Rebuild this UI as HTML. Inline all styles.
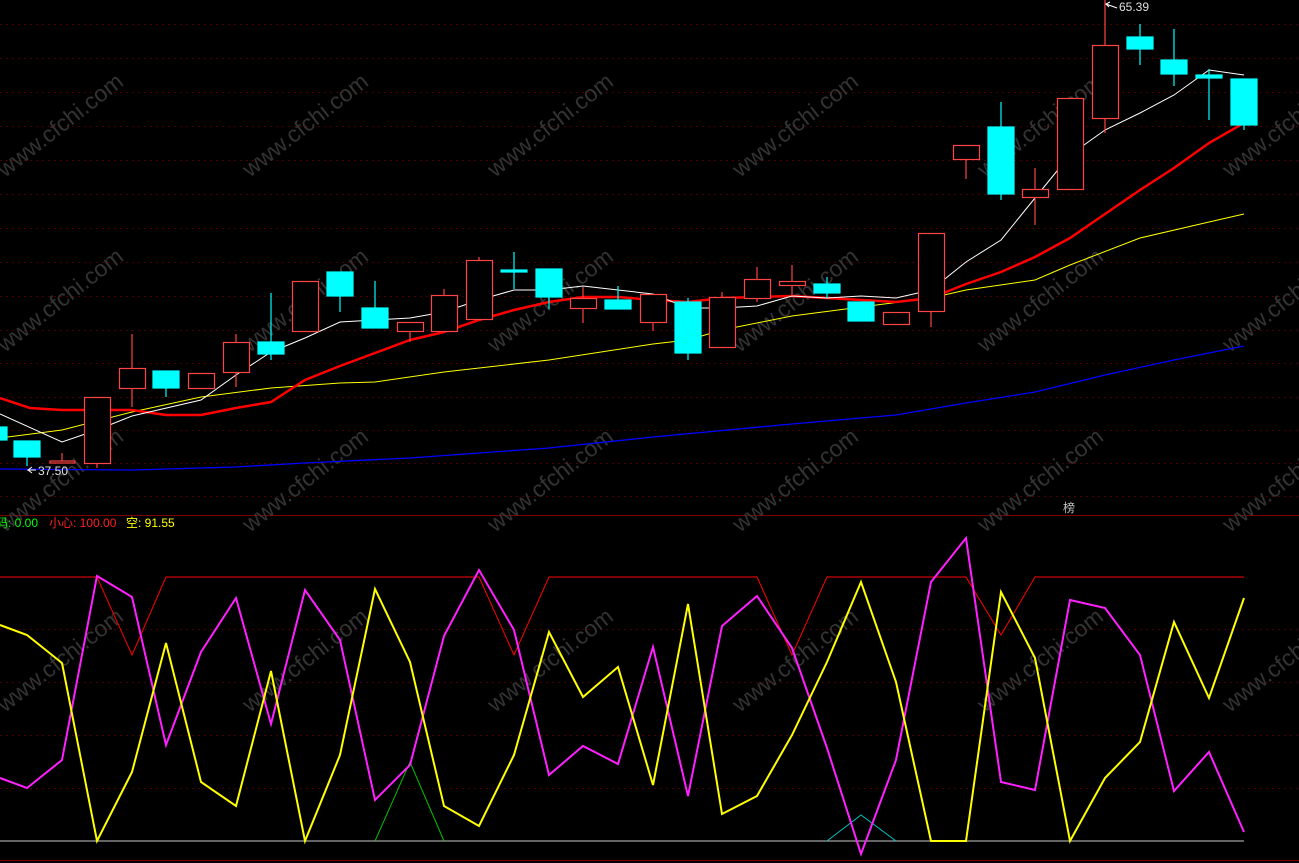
<!DOCTYPE html>
<html><head><meta charset="utf-8"><style>
body{margin:0;background:#000;width:1299px;height:863px;overflow:hidden}
svg{display:block}
text{font-family:"Liberation Sans","Noto Sans CJK SC",sans-serif}
</style></head><body>
<svg width="1299" height="863" viewBox="0 0 1299 863">
<rect width="1299" height="863" fill="#000"/>
<g stroke="#4a0000" stroke-dasharray="2,4" stroke-width="1">
<line x1="0" x2="1299" y1="24.5" y2="24.5"/><line x1="0" x2="1299" y1="58.5" y2="58.5"/><line x1="0" x2="1299" y1="92.5" y2="92.5"/><line x1="0" x2="1299" y1="126.5" y2="126.5"/><line x1="0" x2="1299" y1="160.5" y2="160.5"/><line x1="0" x2="1299" y1="194.5" y2="194.5"/><line x1="0" x2="1299" y1="228.5" y2="228.5"/><line x1="0" x2="1299" y1="262.5" y2="262.5"/><line x1="0" x2="1299" y1="296.5" y2="296.5"/><line x1="0" x2="1299" y1="330.5" y2="330.5"/><line x1="0" x2="1299" y1="363.5" y2="363.5"/><line x1="0" x2="1299" y1="397.5" y2="397.5"/><line x1="0" x2="1299" y1="430.5" y2="430.5"/><line x1="0" x2="1299" y1="463.5" y2="463.5"/><line x1="0" x2="1299" y1="496.5" y2="496.5"/>
<line x1="0" x2="1299" y1="629.5" y2="629.5"/><line x1="0" x2="1299" y1="682.5" y2="682.5"/><line x1="0" x2="1299" y1="735.5" y2="735.5"/><line x1="0" x2="1299" y1="788.5" y2="788.5"/>
</g>
<line x1="0" x2="1299" y1="515.5" y2="515.5" stroke="#800000"/>
<line x1="0" x2="1299" y1="860.5" y2="860.5" stroke="#800000"/>
<g fill="#333" font-size="23">
<text transform="translate(5,178) rotate(-38)">www.cfchi.com</text>
<text transform="translate(250,178) rotate(-38)">www.cfchi.com</text>
<text transform="translate(495,178) rotate(-38)">www.cfchi.com</text>
<text transform="translate(740,178) rotate(-38)">www.cfchi.com</text>
<text transform="translate(985,178) rotate(-38)">www.cfchi.com</text>
<text transform="translate(1230,178) rotate(-38)">www.cfchi.com</text>
<text transform="translate(5,353) rotate(-38)">www.cfchi.com</text>
<text transform="translate(250,353) rotate(-38)">www.cfchi.com</text>
<text transform="translate(495,353) rotate(-38)">www.cfchi.com</text>
<text transform="translate(740,353) rotate(-38)">www.cfchi.com</text>
<text transform="translate(985,353) rotate(-38)">www.cfchi.com</text>
<text transform="translate(1230,353) rotate(-38)">www.cfchi.com</text>
<text transform="translate(5,533) rotate(-38)">www.cfchi.com</text>
<text transform="translate(250,533) rotate(-38)">www.cfchi.com</text>
<text transform="translate(495,533) rotate(-38)">www.cfchi.com</text>
<text transform="translate(740,533) rotate(-38)">www.cfchi.com</text>
<text transform="translate(985,533) rotate(-38)">www.cfchi.com</text>
<text transform="translate(1230,533) rotate(-38)">www.cfchi.com</text>
<text transform="translate(5,713) rotate(-38)">www.cfchi.com</text>
<text transform="translate(250,713) rotate(-38)">www.cfchi.com</text>
<text transform="translate(495,713) rotate(-38)">www.cfchi.com</text>
<text transform="translate(740,713) rotate(-38)">www.cfchi.com</text>
<text transform="translate(985,713) rotate(-38)">www.cfchi.com</text>
<text transform="translate(1230,713) rotate(-38)">www.cfchi.com</text>
</g>
<polyline fill="none" stroke="#0000ff" stroke-width="1.3" points="0,469 132,470 236,467 305,463 410,458 549,448 653,437 792,424 896,415 966,403 1035,392 1105,375 1174,360 1244,346"/>
<polyline fill="none" stroke="#ffff00" stroke-width="1" points="0,438 62,430 132,412 201,397 271,388 340,383 375,382 444,372 549,360 653,344 688,340 722,330 792,316 861,307 931,298 966,290 1035,280 1070,265 1140,238 1209,222 1244,214"/>
<polyline fill="none" stroke="#ff0000" stroke-width="2.5" points="0,398 30,408 62,410 97,410 132,410 166,415 201,415 236,408 271,402 305,380 340,366 375,353 410,340 444,332 479,320 514,310 549,302 583,297 618,297 653,300 688,302 722,298 757,297 792,296 827,298 861,300 896,302 931,298 966,284 1001,272 1035,257 1070,238 1105,214 1140,190 1174,168 1209,143 1244,123"/>
<polyline fill="none" stroke="#ffffff" stroke-width="1" points="0,414 62,442 97,430 132,416 201,400 236,375 271,352 305,338 340,322 375,320 410,318 444,312 479,300 514,290 549,290 583,286 618,290 653,294 688,308 722,308 757,306 792,296 827,298 861,296 896,298 931,290 966,262 1001,240 1035,198 1070,155 1105,130 1140,113 1174,95 1209,70 1244,75"/>
<g stroke-width="1.2">
<g stroke="#00ffff" fill="#00ffff">
<rect x="-13" y="427" width="20" height="13"/>
<line x1="27" x2="27" y1="457" y2="466"/><rect x="14" y="441" width="26" height="16"/>
<line x1="166" x2="166" y1="388" y2="397"/><rect x="153" y="371" width="26" height="17"/>
<rect x="258" y="342" width="26" height="12"/><line x1="271" x2="271" y1="293" y2="360"/>
<line x1="340" x2="340" y1="296" y2="312"/><rect x="327" y="272" width="26" height="24"/>
<line x1="375" x2="375" y1="281" y2="308"/><rect x="362" y="308" width="26" height="20"/>
<line x1="514" x2="514" y1="252" y2="289"/><rect x="501" y="270" width="26" height="2"/>
<line x1="549" x2="549" y1="297" y2="309"/><rect x="536" y="269" width="26" height="28"/>
<line x1="618" x2="618" y1="286" y2="300"/><rect x="605" y="300" width="26" height="9"/>
<line x1="688" x2="688" y1="298" y2="360"/><rect x="675" y="302" width="26" height="51"/>
<line x1="827" x2="827" y1="277" y2="298"/><rect x="814" y="284" width="26" height="9"/>
<rect x="848" y="302" width="26" height="19"/>
<line x1="1001" x2="1001" y1="102" y2="200"/><rect x="988" y="127" width="26" height="67"/>
<line x1="1140" x2="1140" y1="24" y2="65"/><rect x="1127" y="37" width="26" height="12"/>
<line x1="1174" x2="1174" y1="29" y2="86"/><rect x="1161" y="60" width="26" height="14"/>
<line x1="1209" x2="1209" y1="69" y2="120"/><rect x="1196" y="75" width="26" height="3"/>
<line x1="1244" x2="1244" y1="79" y2="130"/><rect x="1231" y="79" width="26" height="46"/>
</g>
<g stroke="#ff4444" fill="#000">
<line x1="62" x2="62" y1="453" y2="461"/><rect x="50" y="461" width="25" height="2"/>
<line x1="97" x2="97" y1="463" y2="468"/><rect x="84.5" y="397.5" width="26" height="66"/>
<line x1="132" x2="132" y1="334" y2="407"/><rect x="119.5" y="368.5" width="26" height="20"/>
<rect x="188.5" y="373.5" width="26" height="15"/>
<line x1="236" x2="236" y1="334" y2="387"/><rect x="223.5" y="342.5" width="26" height="30"/>
<rect x="292.5" y="281.5" width="26" height="50"/>
<line x1="410" x2="410" y1="331" y2="342"/><rect x="397.5" y="322.5" width="26" height="9"/>
<line x1="444" x2="444" y1="289" y2="295"/><rect x="431.5" y="295.5" width="26" height="36"/>
<line x1="479" x2="479" y1="257" y2="260"/><rect x="466.5" y="260.5" width="26" height="59"/>
<line x1="583" x2="583" y1="287" y2="323"/><rect x="570.5" y="298.5" width="26" height="10"/>
<line x1="653" x2="653" y1="322" y2="331"/><rect x="640.5" y="294.5" width="26" height="28"/>
<line x1="722" x2="722" y1="292" y2="297"/><rect x="709.5" y="297.5" width="26" height="50"/>
<line x1="757" x2="757" y1="267" y2="302"/><rect x="744.5" y="279.5" width="26" height="19"/>
<line x1="792" x2="792" y1="265" y2="296"/><rect x="779.5" y="281.5" width="26" height="4"/>
<rect x="883.5" y="312.5" width="26" height="12"/>
<line x1="931" x2="931" y1="311" y2="327"/><rect x="918.5" y="233.5" width="26" height="78"/>
<line x1="966" x2="966" y1="159" y2="179"/><rect x="953.5" y="145.5" width="26" height="14"/>
<line x1="1035" x2="1035" y1="168" y2="189"/><line x1="1035" x2="1035" y1="197" y2="225"/><rect x="1022.5" y="189.5" width="26" height="8"/>
<rect x="1057.5" y="98.5" width="26" height="91"/>
<line x1="1105" x2="1105" y1="0" y2="45"/><line x1="1105" x2="1105" y1="118" y2="133"/><rect x="1092.5" y="45.5" width="26" height="73"/>
</g>
</g>
<text x="38" y="475" fill="#e0e0e0" font-size="12">37.50</text>
<polyline points="36,470 28,470 32,467 28,470 32,473" fill="none" stroke="#fff"/>
<text x="1119" y="11" fill="#e0e0e0" font-size="12">65.39</text>
<polyline points="1117,8 1106,4 1110,2 1106,4 1109,7" fill="none" stroke="#fff"/>
<text x="1063" y="512" fill="#c0c0c0" font-size="12">榜</text>
<text y="527" font-size="12"><tspan x="-4" fill="#00ff00">码: 0.00</tspan><tspan x="49" fill="#ff2020">小心: 100.00</tspan><tspan x="126" fill="#ffff00">空: 91.55</tspan></text>
<line x1="0" x2="1244" y1="841" y2="841" stroke="#c8c8c8" stroke-width="1"/>
<polyline fill="none" stroke="#ff0000" stroke-width="1" points="0,577 97,577 132,655 166,577 479,577 514,655 549,577 757,577 792,655 827,577 966,577 1001,635 1035,577 1244,577"/>
<polyline fill="none" stroke="#00c000" points="375,841 410,762 444,841"/>
<polyline fill="none" stroke="#00c0c0" points="827,841 861,815 896,841"/>
<polyline fill="none" stroke="#ff20ff" stroke-width="2" points="0,778 27,788 62,760 97,576 132,597 166,745 201,652 236,598 271,724 305,590 340,640 375,800 410,765 444,636 479,570 514,630 549,775 583,746 618,764 653,647 688,796 722,626 757,596 792,648 827,748 861,854 896,760 931,582 966,538 1001,782 1035,790 1070,600 1105,608 1140,655 1174,791 1209,752 1244,832"/>
<polyline fill="none" stroke="#ffff00" stroke-width="2" points="0,625 27,635 62,663 97,841 132,772 166,643 201,782 236,806 271,671 305,841 340,755 375,589 410,662 444,806 479,826 514,755 549,632 583,697 618,667 653,785 688,604 722,814 757,796 792,735 827,662 861,582 896,682 931,841 966,841 1001,592 1035,658 1070,841 1105,778 1140,742 1174,622 1209,698 1244,598"/>
</svg>
</body></html>
